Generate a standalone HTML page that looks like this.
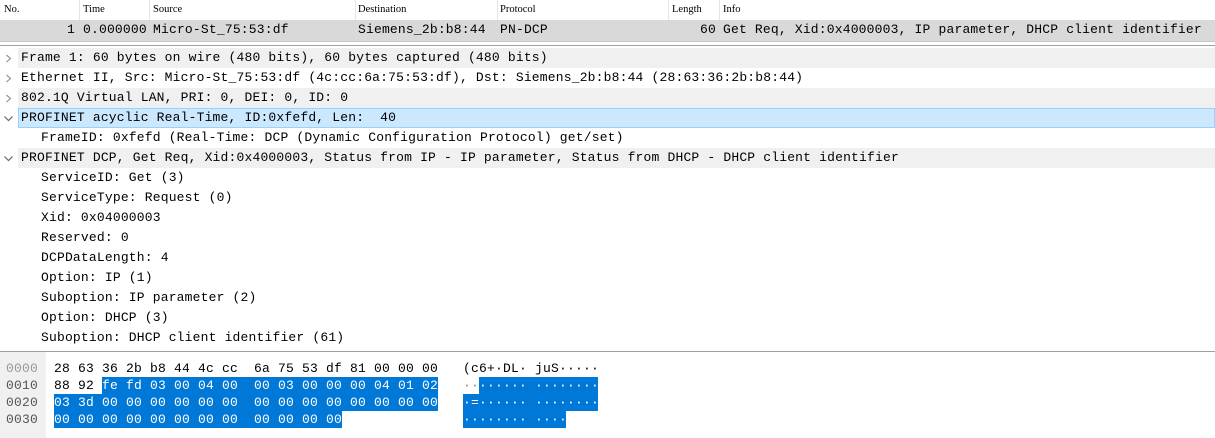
<!DOCTYPE html>
<html><head><meta charset="utf-8"><style>
*{margin:0;padding:0;box-sizing:border-box}
body{width:1215px;height:438px;background:#fff;position:relative;overflow:hidden;font-family:"Liberation Mono","DejaVu Sans Mono",monospace;font-size:13px;color:#000;letter-spacing:0.18px}
.hdr{position:absolute;top:0;left:0;width:1215px;height:20px;background:#fff;font-family:"Liberation Serif",serif;font-size:10.5px;letter-spacing:0}
.hdr span{position:absolute;top:4px}
.sep{position:absolute;top:0;width:1px;height:20px;background:#e5e5e5}
.prow{position:absolute;top:20px;left:0;width:1215px;height:21px;background:#d9d9d9}
.prow span{position:absolute;top:2px;white-space:pre}
.tr{position:absolute;left:0;width:1215px;height:20px;line-height:20px;white-space:pre}
.g{background:linear-gradient(to right,#fff 18px,#f0f0f0 18px)}
.sel{background:linear-gradient(to right,#fff 18px,#cce8ff 18px);}
.sel::after{content:"";position:absolute;left:18px;top:0;width:1197px;height:20px;border:1px solid #99d1ff;box-sizing:border-box}
.arr{position:absolute;left:4px;top:6px;width:9px;height:9px}
.hx{position:absolute;white-space:pre;letter-spacing:0.2px;line-height:17px;height:17px}
.b{background:#0078d7;color:#fff}
</style></head><body>
<div class="hdr">
<span style="left:4px">No.</span><span style="left:83px">Time</span><span style="left:153px">Source</span><span style="left:358px">Destination</span><span style="left:500px">Protocol</span><span style="left:672px">Length</span><span style="left:723px">Info</span>
<div class="sep" style="left:79px"></div><div class="sep" style="left:149px"></div><div class="sep" style="left:355px"></div><div class="sep" style="left:497px"></div><div class="sep" style="left:668px"></div><div class="sep" style="left:719px"></div>
</div>
<div class="prow">
<span style="left:67px">1</span><span style="left:83px">0.000000</span><span style="left:153px">Micro-St_75:53:df</span><span style="left:358px">Siemens_2b:b8:44</span><span style="left:500px">PN-DCP</span><span style="left:700px">60</span><span style="left:723px">Get Req, Xid:0x4000003, IP parameter, DHCP client identifier</span>
</div>
<div style="position:absolute;top:41px;left:0;width:1215px;height:1px;background:#c8c8c8"></div>
<div style="position:absolute;top:45px;left:0;width:1215px;height:1px;background:#a0a0a0"></div>

<div class="tr g" style="top:48px"><svg class="arr" viewBox="0 0 9 9"><path d="M2.5 1 L6.5 4.5 L2.5 8" fill="none" stroke="#999" stroke-width="1.2"/></svg><span style="position:absolute;left:21px">Frame 1: 60 bytes on wire (480 bits), 60 bytes captured (480 bits)</span></div>
<div class="tr" style="top:68px"><svg class="arr" viewBox="0 0 9 9"><path d="M2.5 1 L6.5 4.5 L2.5 8" fill="none" stroke="#999" stroke-width="1.2"/></svg><span style="position:absolute;left:21px">Ethernet II, Src: Micro-St_75:53:df (4c:cc:6a:75:53:df), Dst: Siemens_2b:b8:44 (28:63:36:2b:b8:44)</span></div>
<div class="tr g" style="top:88px"><svg class="arr" viewBox="0 0 9 9"><path d="M2.5 1 L6.5 4.5 L2.5 8" fill="none" stroke="#999" stroke-width="1.2"/></svg><span style="position:absolute;left:21px">802.1Q Virtual LAN, PRI: 0, DEI: 0, ID: 0</span></div>
<div class="tr sel" style="top:108px"><svg class="arr" viewBox="0 0 9 9"><path d="M0.5 2.5 L4.5 6.5 L8.5 2.5" fill="none" stroke="#666" stroke-width="1.2"/></svg><span style="position:absolute;left:21px">PROFINET acyclic Real-Time, ID:0xfefd, Len:  40</span></div>
<div class="tr" style="top:128px"><span style="position:absolute;left:41px">FrameID: 0xfefd (Real-Time: DCP (Dynamic Configuration Protocol) get/set)</span></div>
<div class="tr g" style="top:148px"><svg class="arr" viewBox="0 0 9 9"><path d="M0.5 2.5 L4.5 6.5 L8.5 2.5" fill="none" stroke="#666" stroke-width="1.2"/></svg><span style="position:absolute;left:21px">PROFINET DCP, Get Req, Xid:0x4000003, Status from IP - IP parameter, Status from DHCP - DHCP client identifier</span></div>
<div class="tr" style="top:168px"><span style="position:absolute;left:41px">ServiceID: Get (3)</span></div>
<div class="tr" style="top:188px"><span style="position:absolute;left:41px">ServiceType: Request (0)</span></div>
<div class="tr" style="top:208px"><span style="position:absolute;left:41px">Xid: 0x04000003</span></div>
<div class="tr" style="top:228px"><span style="position:absolute;left:41px">Reserved: 0</span></div>
<div class="tr" style="top:248px"><span style="position:absolute;left:41px">DCPDataLength: 4</span></div>
<div class="tr" style="top:268px"><span style="position:absolute;left:41px">Option: IP (1)</span></div>
<div class="tr" style="top:288px"><span style="position:absolute;left:41px">Suboption: IP parameter (2)</span></div>
<div class="tr" style="top:308px"><span style="position:absolute;left:41px">Option: DHCP (3)</span></div>
<div class="tr" style="top:328px"><span style="position:absolute;left:41px">Suboption: DHCP client identifier (61)</span></div>

<div style="position:absolute;top:351px;left:0;width:1215px;height:1px;background:#a0a0a0"></div>
<div style="position:absolute;top:352px;left:0;width:46px;height:86px;background:#f0f0f0"></div>

<div class="hx" style="top:360px;left:6px;color:#999">0000</div>
<div class="hx" style="top:377px;left:6px;color:#555">0010</div>
<div class="hx" style="top:394px;left:6px;color:#555">0020</div>
<div class="hx" style="top:411px;left:6px;color:#555">0030</div>

<div class="hx" style="top:360px;left:54px">28 63 36 2b b8 44 4c cc  6a 75 53 df 81 00 00 00</div>
<div class="hx" style="top:377px;left:54px">88 92 </div>
<div class="hx b" style="top:377px;left:102px;width:336px">fe fd 03 00 04 00  00 03 00 00 00 04 01 02</div>
<div class="hx b" style="top:394px;left:54px;width:384px">03 3d 00 00 00 00 00 00  00 00 00 00 00 00 00 00</div>
<div class="hx b" style="top:411px;left:54px;width:288px">00 00 00 00 00 00 00 00  00 00 00 00</div>

<div class="hx" style="top:360px;left:463px">(c6+·DL· juS·····</div>
<div class="hx" style="top:377px;left:463px;color:#888">··</div>
<div class="hx b" style="top:377px;left:479px;width:119px">······ ········</div>
<div class="hx b" style="top:394px;left:463px;width:135px">·=······ ········</div>
<div class="hx b" style="top:411px;left:463px;width:103px">········ ····</div>
</body></html>
